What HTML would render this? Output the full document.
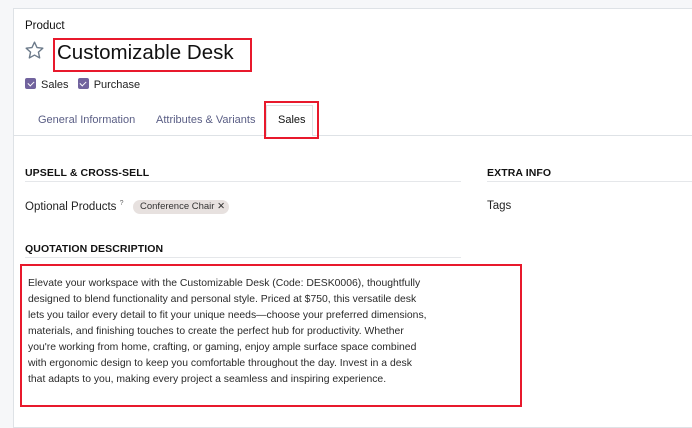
<!DOCTYPE html>
<html><head><meta charset="utf-8"><style>
*{margin:0;padding:0;box-sizing:border-box}
body{width:692px;height:417px;overflow:hidden;background:#f6f7f9;font-family:"Liberation Sans",sans-serif;color:#222;position:relative}
.card{position:absolute;left:13px;top:8px;width:700px;height:420px;background:#fff;border:1px solid #dee2e6}
.a{position:absolute;white-space:nowrap}
.red{position:absolute;border:2.5px solid #e8192c}
.cb{display:inline-block;width:11px;height:11px;background:#71639e;border-radius:2px;vertical-align:-1px;margin-right:5px;position:relative}
.cb:after{content:"";position:absolute;left:3.5px;top:2px;width:3px;height:5px;border:solid #fff;border-width:0 1.3px 1.3px 0;transform:rotate(45deg)}
.h{font-size:10.5px;font-weight:bold;color:#111;letter-spacing:0.1px}
.line{position:absolute;height:1px;background:#e5e7ea}
.tab{font-size:11px;color:#5a5e85}
</style></head><body>
<div class="card"></div>
<div class="a" style="left:25px;top:20px;font-size:11.5px;color:#111">Product</div>
<svg class="a" style="left:24px;top:40px" width="21" height="21" viewBox="0 0 24 24"><path d="M12 2.5l2.9 6.2 6.6.7-5 4.5 1.4 6.6L12 17.2l-5.9 3.3 1.4-6.6-5-4.5 6.6-.7z" fill="none" stroke="#6c7a8a" stroke-width="1.6" stroke-linejoin="round"/></svg>
<div class="a" style="left:57px;top:41px;font-size:20.5px;color:#111">Customizable Desk</div>
<div class="red" style="left:53px;top:38px;width:199px;height:34px"></div>
<div class="a" style="left:25px;top:78px;font-size:11px;color:#222"><span class="cb"></span>Sales&nbsp;&nbsp;&nbsp;<span class="cb"></span>Purchase</div>
<div class="line" style="left:13px;top:135px;width:680px;background:#dee2e6"></div>
<div style="position:absolute;left:266px;top:105px;width:47px;height:31px;background:#fff;border:1px solid #dee2e6;border-bottom:none"></div>
<div class="a tab" style="left:38px;top:114px">General Information</div>
<div class="a tab" style="left:156px;top:114px">Attributes &amp; Variants</div>
<div class="a" style="left:278px;top:114px;font-size:11px;color:#111">Sales</div>
<div class="red" style="left:264px;top:101px;width:55px;height:38px"></div>
<div class="a h" style="left:25px;top:167px">UPSELL &amp; CROSS-SELL</div>
<div class="line" style="left:25px;top:181px;width:436px"></div>
<div class="a h" style="left:487px;top:167px">EXTRA INFO</div>
<div class="line" style="left:487px;top:181px;width:210px"></div>
<div class="a" style="left:25px;top:200px;font-size:11.5px">Optional Products <sup style="font-size:7px;color:#666">?</sup></div>
<div class="a" style="left:133px;top:200px;width:96px;height:14px;background:#e7e1df;border-radius:7px;font-size:9.5px;line-height:14px;padding-left:7px;color:#333">Conference Chair ✕</div>
<div class="a" style="left:487px;top:200px;font-size:11.5px">Tags</div>
<div class="a h" style="left:25px;top:243px">QUOTATION DESCRIPTION</div>
<div class="line" style="left:25px;top:257px;width:436px"></div>
<div class="red" style="left:20px;top:264px;width:502px;height:143px"></div>
<div class="a" style="left:28px;top:276px;font-size:10.4px;line-height:16px;color:#2a2a2a">Elevate your workspace with the Customizable Desk (Code: DESK0006), thoughtfully<br>designed to blend functionality and personal style. Priced at $750, this versatile desk<br>lets you tailor every detail to fit your unique needs—choose your preferred dimensions,<br>materials, and finishing touches to create the perfect hub for productivity. Whether<br>you're working from home, crafting, or gaming, enjoy ample surface space combined<br>with ergonomic design to keep you comfortable throughout the day. Invest in a desk<br>that adapts to you, making every project a seamless and inspiring experience.</div>
</body></html>
